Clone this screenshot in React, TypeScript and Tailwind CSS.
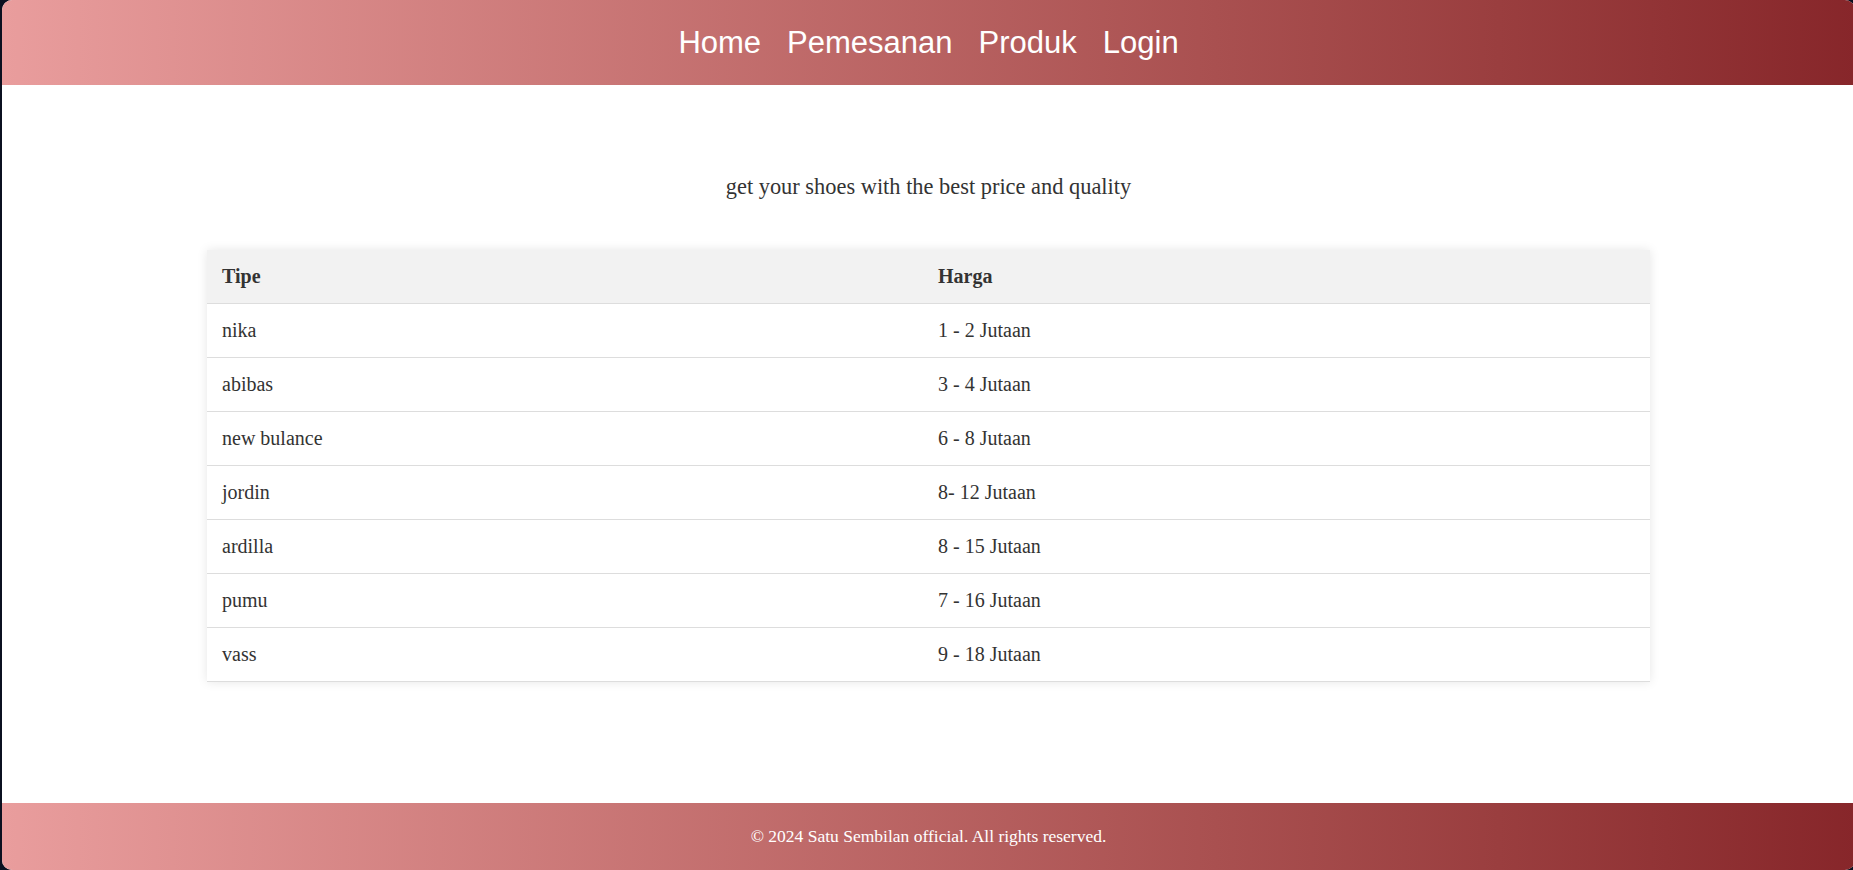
const navLinks = ['Home', 'Pemesanan', 'Produk', 'Login'];

const products = [
  { tipe: 'nika', harga: '1 - 2 Jutaan' },
  { tipe: 'abibas', harga: '3 - 4 Jutaan' },
  { tipe: 'new bulance', harga: '6 - 8 Jutaan' },
  { tipe: 'jordin', harga: '8- 12 Jutaan' },
  { tipe: 'ardilla', harga: '8 - 15 Jutaan' },
  { tipe: 'pumu', harga: '7 - 16 Jutaan' },
  { tipe: 'vass', harga: '9 - 18 Jutaan' },
];

export default function App() {
  return (
    <div className="h-screen w-full overflow-hidden bg-[#0b1020]">
      <div className="ml-[2px] flex h-full w-[1853px] flex-col overflow-hidden rounded-[10px] bg-white font-['Liberation_Serif','Times_New_Roman',serif] text-[#333]">
        <header className="flex h-[85px] shrink-0 items-center justify-center bg-gradient-to-r from-[#e99d9d] to-[#87262a]">
          <nav className="flex gap-[26px] font-['Liberation_Sans',Arial,sans-serif] text-[31px] text-white">
            {navLinks.map(link => (
              <a key={link} href="#" className="leading-none">
                {link}
              </a>
            ))}
          </nav>
        </header>

        <main className="flex-1 pt-[89px]">
          <p className="mb-[50px] text-center text-[22.4px] leading-[26px]">
            get your shoes with the best price and quality
          </p>

          <table className="mx-auto w-[1443px] border-collapse text-left text-[20px] shadow-[0_0_10px_rgba(0,0,0,0.1)]">
            <thead>
              <tr className="border-b border-[#ddd] bg-[#f2f2f2]">
                <th className="w-[716px] px-[15px] py-[15px] font-bold leading-[23px]">Tipe</th>
                <th className="px-[15px] py-[15px] font-bold leading-[23px]">Harga</th>
              </tr>
            </thead>
            <tbody>
              {products.map(p => (
                <tr key={p.tipe} className="border-b border-[#ddd]">
                  <td className="px-[15px] py-[15px] leading-[23px]">{p.tipe}</td>
                  <td className="px-[15px] py-[15px] leading-[23px]">{p.harga}</td>
                </tr>
              ))}
            </tbody>
          </table>
        </main>

        <footer className="flex h-[67px] shrink-0 items-center justify-center bg-gradient-to-r from-[#e99d9d] to-[#87262a] text-[17.5px] text-white">
          © 2024 Satu Sembilan official. All rights reserved.
        </footer>
      </div>
    </div>
  );
}
